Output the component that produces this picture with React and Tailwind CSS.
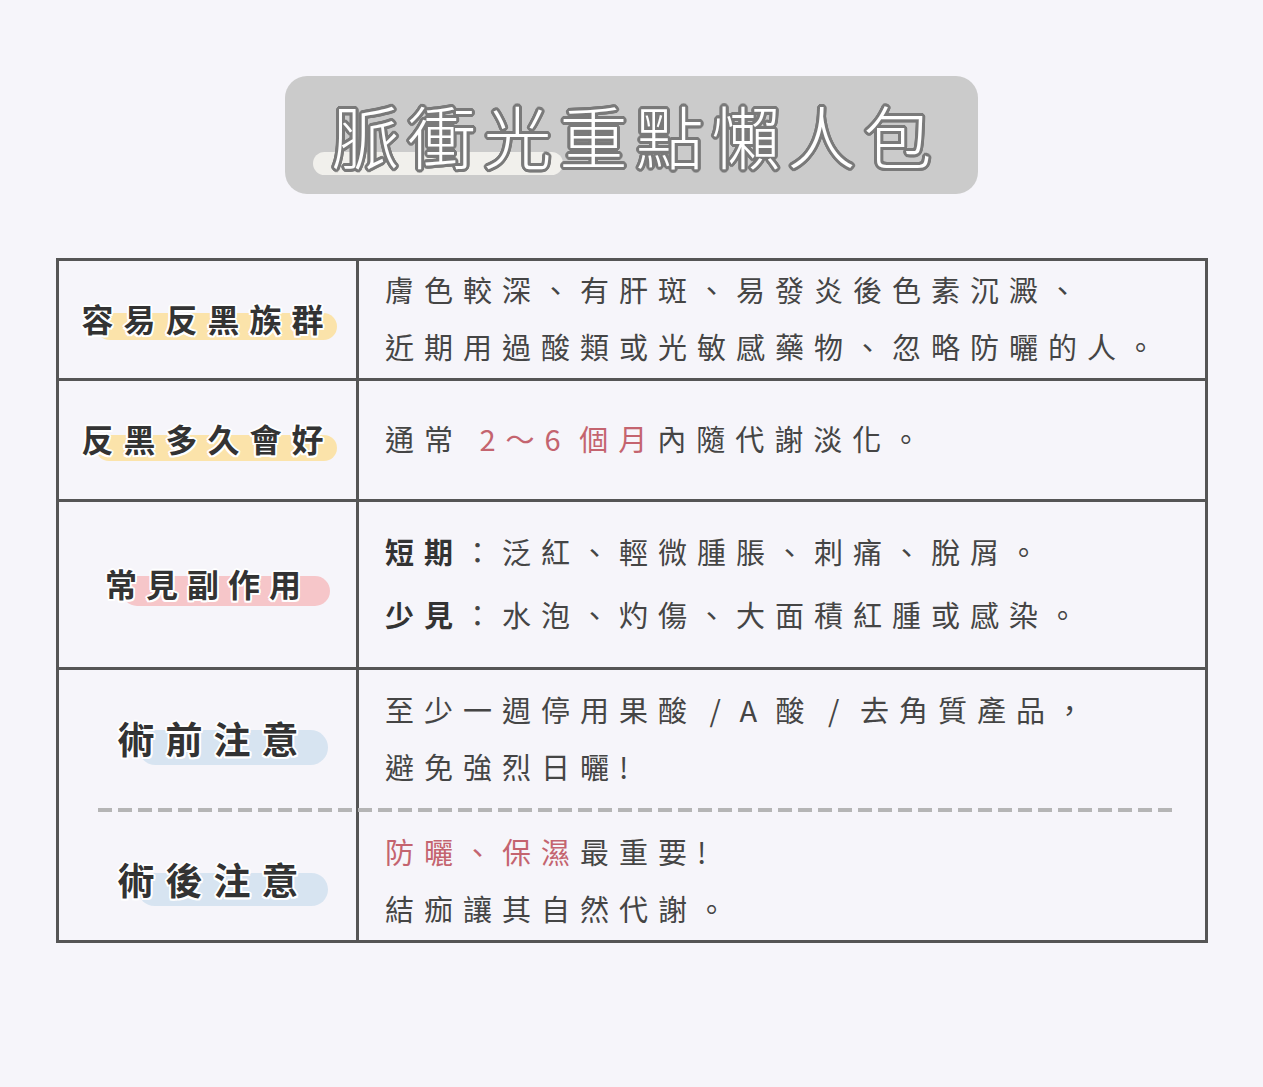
const FONT = "font-['Noto_Sans_CJK_TC','Noto_Sans_CJK_JP',sans-serif]"

// white halo round the bold labels
const HALO =
  '[text-shadow:2px_0_#fff,-2px_0_#fff,0_2px_#fff,0_-2px_#fff,1.5px_1.5px_#fff,-1.5px_1.5px_#fff,1.5px_-1.5px_#fff,-1.5px_-1.5px_#fff]'

// grey outline round the title letters
const OUTLINE =
  '[text-shadow:3px_0_#7a7a7a,2.8px_1.1px_#7a7a7a,2.1px_2.1px_#7a7a7a,1.1px_2.8px_#7a7a7a,0_3px_#7a7a7a,-1.1px_2.8px_#7a7a7a,-2.1px_2.1px_#7a7a7a,-2.8px_1.1px_#7a7a7a,-3px_0_#7a7a7a,-2.8px_-1.1px_#7a7a7a,-2.1px_-2.1px_#7a7a7a,-1.1px_-2.8px_#7a7a7a,0_-3px_#7a7a7a,1.1px_-2.8px_#7a7a7a,2.1px_-2.1px_#7a7a7a,2.8px_-1.1px_#7a7a7a]'

function Label({ text, textClass, barClass }) {
  return (
    <span className="relative -top-[2px] inline-block">
      <span className={'absolute rounded-full ' + barClass} />
      <span className={'relative block font-bold leading-none text-[#333] ' + HALO + ' ' + textClass}>
        {text}
      </span>
    </span>
  )
}

function Body({ children, lead = 'leading-[57px]' }) {
  return (
    <div className={'-translate-y-[2px] pl-[26px] text-[29px] tracking-[10px] text-[#454545] ' + lead}>
      {children}
    </div>
  )
}

const Red = ({ children }) => <span className="text-[#c4646f]">{children}</span>

export default function App() {
  return (
    <div className={'min-h-[1087px] w-full bg-[#f6f5fa] pt-[76px] ' + FONT}>
      {/* Title */}
      <div className="relative mx-auto flex h-[118px] w-[693px] items-center justify-center rounded-[22px] bg-[#cbcbcb]">
        <span className="absolute left-[28px] top-[76px] h-[23px] w-[250px] rounded-full bg-[#f1f0ec]" />
        <h1
          className={
            'relative pl-[8px] text-[68px] font-light leading-none tracking-[8px] text-white ' + OUTLINE
          }
        >
          脈衝光重點懶人包
        </h1>
      </div>

      {/* Table */}
      <div className="mt-16 ml-[56px] w-[1152px] border-[3px] border-[#555]">
        <div className="grid h-[120px] grid-cols-[300px_1fr] border-b-[3px] border-[#555]">
          <div className="flex items-center justify-center border-r-[3px] border-[#555]">
            <Label
              text="容易反黑族群"
              textClass="text-[32px] tracking-[10px]"
              barClass="left-[15px] right-[-3px] top-[11px] bottom-[-6px] bg-[#fbe3aa]"
            />
          </div>
          <div className="flex items-center">
            <Body>
              <p>膚色較深、有肝斑、易發炎後色素沉澱、</p>
              <p>近期用過酸類或光敏感藥物、忽略防曬的人。</p>
            </Body>
          </div>
        </div>

        <div className="grid h-[121px] grid-cols-[300px_1fr] border-b-[3px] border-[#555]">
          <div className="flex items-center justify-center border-r-[3px] border-[#555]">
            <Label
              text="反黑多久會好"
              textClass="text-[32px] tracking-[10px]"
              barClass="left-[15px] right-[-3px] top-[13px] bottom-[-7px] bg-[#fbe3aa]"
            />
          </div>
          <div className="flex items-center">
            <Body>
              <p>
                通常 <Red>2～6<span className="tracking-[2px]"> </span>個月</Red>內隨代謝淡化。
              </p>
            </Body>
          </div>
        </div>

        <div className="grid h-[168px] grid-cols-[300px_1fr] border-b-[3px] border-[#555]">
          <div className="flex items-center justify-center border-r-[3px] border-[#555]">
            <Label
              text="常見副作用"
              textClass="text-[32px] tracking-[9px]"
              barClass="left-[17px] right-[-20px] top-[9px] bottom-[-7px] bg-[#f6c6c9]"
            />
          </div>
          <div className="flex items-center">
            <Body lead="leading-[63px]">
              <p>
                <b className="font-bold text-[#333]">短期</b>：泛紅、輕微腫脹、刺痛、脫屑。
              </p>
              <p>
                <b className="font-bold text-[#333]">少見</b>：水泡、灼傷、大面積紅腫或感染。
              </p>
            </Body>
          </div>
        </div>

        <div className="relative grid h-[270px] grid-cols-[300px_1fr] grid-rows-[140px_130px]">
          <div className="flex items-center justify-center border-r-[3px] border-[#555]">
            <Label
              text="術前注意"
              textClass="pl-[12px] text-[37px] tracking-[11px]"
              barClass="left-[32px] right-[-18px] top-[10px] bottom-[-8px] bg-[#d7e4f1]"
            />
          </div>
          <div className="flex items-center">
            <Body>
              <p>
                至少一週停用果酸<span className="tracking-[6px]"> / A </span>酸<span className="tracking-[7px]"> / </span>去角質產品，
              </p>
              <p>避免強烈日曬!</p>
            </Body>
          </div>
          <div className="flex items-center justify-center border-r-[3px] border-[#555] pt-[13px]">
            <Label
              text="術後注意"
              textClass="pl-[12px] text-[37px] tracking-[11px]"
              barClass="left-[32px] right-[-18px] top-[12px] bottom-[-8px] bg-[#d7e4f1]"
            />
          </div>
          <div className="flex items-center pt-[13px]">
            <Body>
              <p>
                <Red>防曬、保濕</Red>最重要!
              </p>
              <p>結痂讓其自然代謝。</p>
            </Body>
          </div>
          <div className="absolute left-[39px] top-[138px] h-[4px] w-[1075px] bg-[repeating-linear-gradient(to_right,#b5b5b5_0_14px,transparent_14px_20px)]" />
        </div>
      </div>
    </div>
  )
}
